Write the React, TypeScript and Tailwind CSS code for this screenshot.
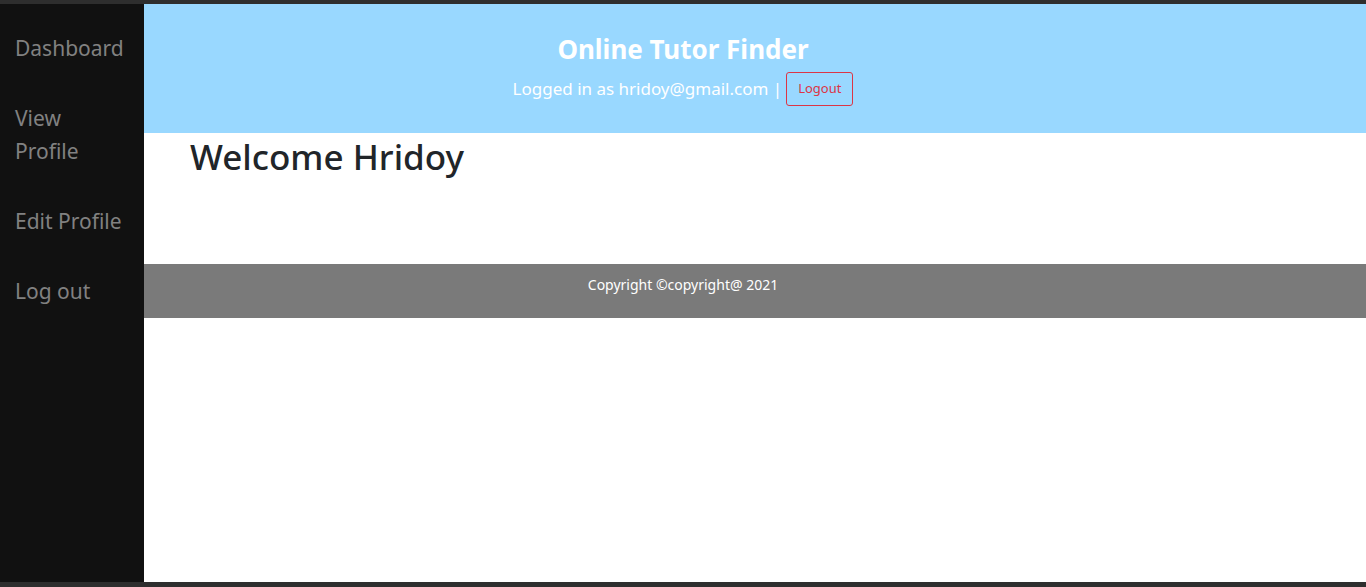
import React from "react";

export default function App() {
  const font = { fontFamily: '"Noto Sans", "Open Sans", sans-serif' };
  return (
    <div className="h-[587px] w-[1366px] flex flex-col bg-[#2e2e2e] overflow-hidden" style={font}>
      <div className="h-[4px] shrink-0" />
      <div className="flex flex-1 min-h-0">
        <nav className="w-[144px] shrink-0 bg-[#111111] pt-[28px] pl-[15px] flex flex-col gap-[37px] text-[21px] leading-[33px] text-[#818181]">
          <a>Dashboard</a>
          <a className="w-[80px]">View Profile</a>
          <a>Edit Profile</a>
          <a>Log out</a>
        </nav>
        <main className="flex-1 bg-white flex flex-col">
          <header className="h-[129px] bg-[#99d8ff] flex flex-col items-center pr-[144px] pt-[26px] text-white">
            <h1 className="text-[26px] leading-[38px] font-bold">Online Tutor Finder</h1>
            <div className="flex items-center mt-[4px] text-[17px]">
              <span>Logged in as hridoy@gmail.com |</span>
              <span className="ml-[4px] h-[34px] px-[11px] flex items-center border border-solid border-[color:#dc3545] rounded-[3px] text-[#dc3545] text-[13px]">
                Logout
              </span>
            </div>
          </header>
          <section className="h-[131px] pl-[46px] pt-[2px]">
            <h2 className="text-[35px] leading-[44px] font-medium text-[#212529]">Welcome Hridoy</h2>
          </section>
          <footer className="h-[54px] bg-[#7a7a7a] flex justify-center pr-[144px] pt-[10px] text-white text-[14px]">
            Copyright ©copyright@ 2021
          </footer>
        </main>
      </div>
      <div className="h-[5px] shrink-0" />
    </div>
  );
}
